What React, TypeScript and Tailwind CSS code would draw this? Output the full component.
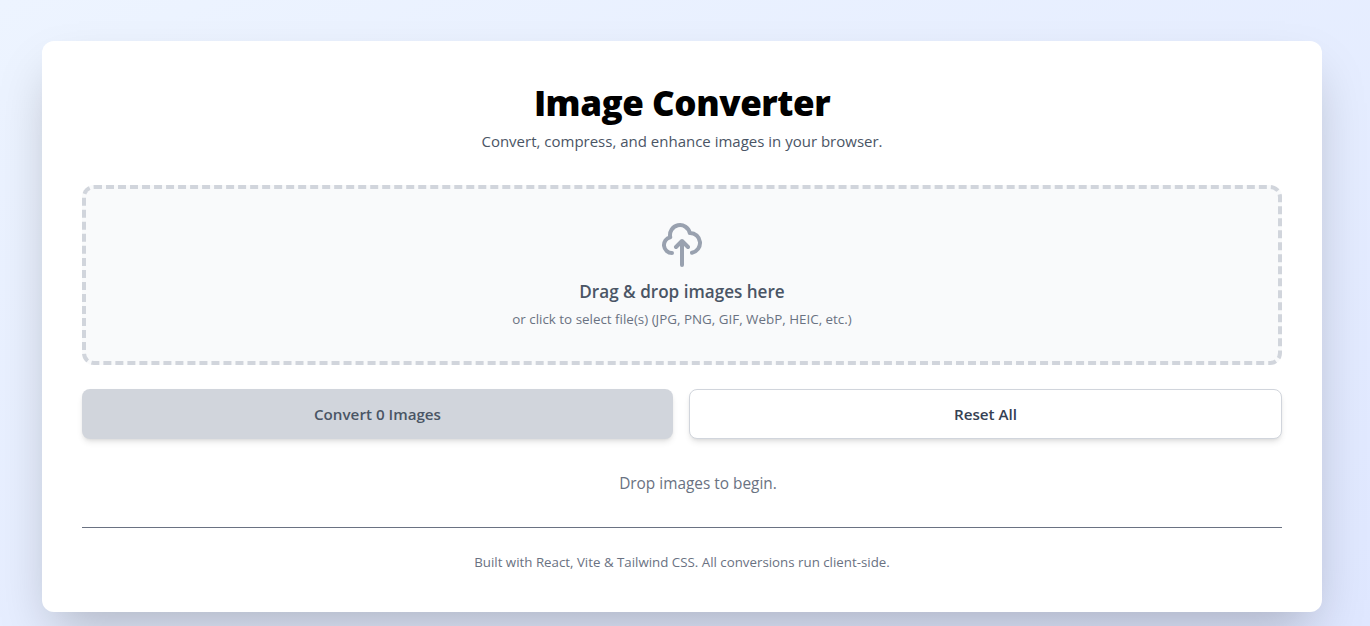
import React from "react";

function CloudUpload() {
  return (
    <svg className="h-12 w-12 text-gray-400" viewBox="0 0 24 24" fill="none" stroke="currentColor" strokeWidth={2} strokeLinecap="round" strokeLinejoin="round">
      <path d="M7 16a4 4 0 01-.88-7.903A5 5 0 1115.9 6L16 6a5 5 0 011 9.9M15 13l-3-3m0 0l-3 3m3-3v12" />
    </svg>
  );
}

export default function App() {
  return (
    <div className="h-[626px] overflow-hidden bg-linear-to-br/srgb from-[#edf4ff] to-[#dfe7ff] pt-[41px] pr-12 pl-[42px] font-['Open_Sans',sans-serif] text-gray-800">
      <main className="h-[571px] w-[1280px] rounded-xl bg-white px-10 pt-10 shadow-2xl">
        <header className="text-center">
          <h1 className="h-[46px] text-[35px] leading-[44px] font-extrabold tracking-[-0.45px] whitespace-nowrap text-black">Image Converter</h1>
          <p className="mt-[2px] text-[15px] leading-6 text-gray-600">Convert, compress, and enhance images in your browser.</p>
        </header>
        <section className="mt-8 flex h-[180px] flex-col items-center rounded-xl border-4 border-dashed border-gray-300 bg-gray-50 pt-8">
          <CloudUpload />
          <p className="mt-[9px] text-[17.1px] leading-7 font-semibold text-gray-600">Drag &amp; drop images here</p>
          <p className="mt-[3px] text-[13.4px] leading-5 text-gray-500">or click to select file(s) (JPG, PNG, GIF, WebP, HEIC, etc.)</p>
        </section>
        <div className="mt-6 flex gap-4 text-[15.2px]">
          <button className="h-[50px] w-[591px] rounded-lg bg-gray-300 font-semibold text-gray-600 shadow-md">Convert 0 Images</button>
          <button className="h-[50px] flex-1 rounded-lg border border-gray-300 bg-white font-semibold text-gray-700 shadow-md">Reset All</button>
        </div>
        <p className="mt-[33px] pl-8 text-center text-[15.4px] leading-6 text-gray-500">Drop images to begin.</p>
        <footer className="mt-[31px] border-t border-gray-500 pt-6 text-center text-[13.3px] leading-5 text-gray-500">Built with React, Vite &amp; Tailwind CSS. All conversions run client-side.</footer>
      </main>
    </div>
  );
}
